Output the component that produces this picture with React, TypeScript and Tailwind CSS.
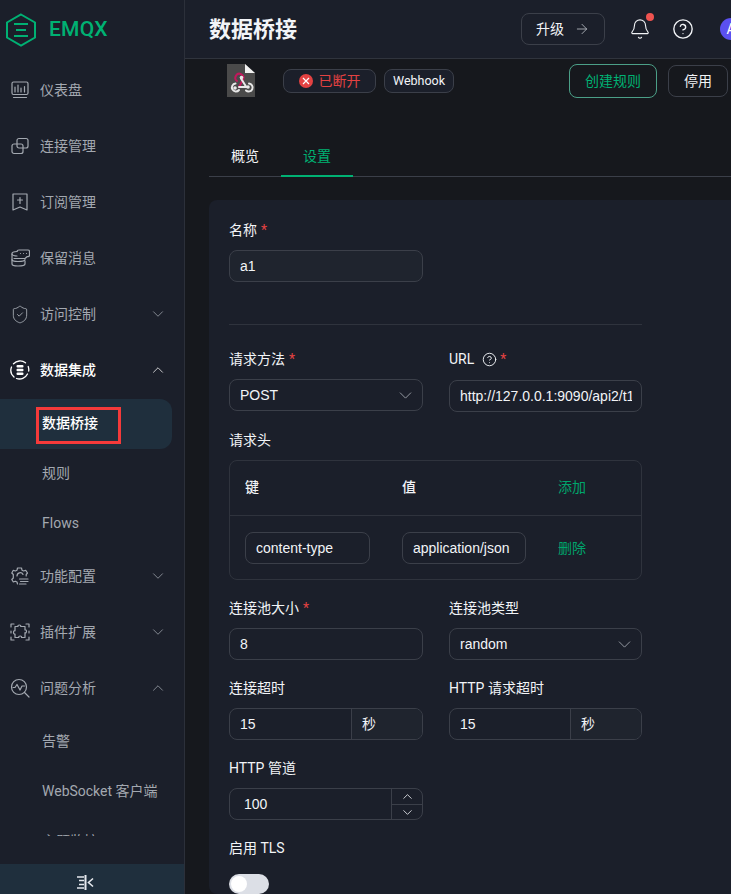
import type { ReactNode } from "react"
import { ArrowRight, Bell, ChevronDown, ChevronUp, CircleHelp, ShieldCheck } from "lucide-react"

const stroke = {
  fill: "none",
  stroke: "currentColor",
  strokeWidth: 1.2,
  strokeLinecap: "round" as const,
  strokeLinejoin: "round" as const,
}

function Logo() {
  return (
    <svg width="32" height="34" viewBox="0 0 32 34" fill="none" stroke="#00b173" strokeWidth="2">
      <path d="M16 1.500 30 9.500v15l-14 8-14-8v-15z" />
      <path d="M9 11h14M11 17h10M9 23h14" strokeWidth="2.2" />
    </svg>
  )
}

function DashboardIcon() {
  return (
    <svg width="18" height="18" viewBox="0 0 18 18" {...stroke}>
      <rect x="1" y="1" width="16" height="12.5" rx="1.5" />
      <path d="M4 11V6M7 11V4M10 11V7M13.5 11V5.5M2.5 16.5h13" />
    </svg>
  )
}

function ConnectionIcon() {
  return (
    <svg width="18" height="18" viewBox="0 0 18 18" {...stroke}>
      <rect x="6" y="1.5" width="11" height="9.5" rx="2" />
      <rect x="1" y="7" width="11" height="9.5" rx="2" />
    </svg>
  )
}

function SubscribeIcon() {
  return (
    <svg width="18" height="18" viewBox="0 0 18 18" {...stroke}>
      <path d="M2 1h14v16l-7-3-7 3z" />
      <path d="M9 4.500v6M6.500 7h5" />
    </svg>
  )
}

function RetainedIcon() {
  return (
    <svg width="19" height="18" viewBox="0 0 19 18" {...stroke}>
      <path d="M6 2.500C6 1.500 7 1 8 1h9c1 0 1.500.7 1.500 1.500V6c0 1-.6 1.700-1.500 1.700h-1L14 9.500H3" />
      <path d="M6 2.500C3 2.700 1 3.300 1 4.500V15c0 1.300 3 2 6 2s7-.7 7-2v-3" />
      <path d="M1 5c0 1.300 3 2 5 2M1 10.500c0 1.300 3 2 6 2s7-.7 7-2" />
      <path d="M9.500 4.500h.01M12.500 4.500h.01M15.500 4.500h.01" />
    </svg>
  )
}

function IntegrationIcon() {
  return (
    <svg width="20" height="20" viewBox="0 0 20 20" fill="none" stroke="currentColor" strokeWidth="1.3" strokeLinecap="round">
      <path d="M15.500 2.800A9 9 0 0 0 3.500 3.800M1.500 7a9 9 0 0 0 2.500 10M6.500 18.500a9 9 0 0 0 11-4.500M18.700 11a9 9 0 0 0-.5-4.500" />
      <rect x="6.500" y="5" width="7" height="2.600" rx="1" fill="currentColor" stroke="none" />
      <rect x="6.500" y="8.700" width="7" height="2.600" rx="1" fill="currentColor" stroke="none" />
      <rect x="6.500" y="12.400" width="7" height="2.600" rx="1" fill="currentColor" stroke="none" />
    </svg>
  )
}

function GearIcon() {
  return (
    <svg width="18" height="18" viewBox="0 0 18 18" {...stroke}>
      <path d="M6.500 17 6 15 4.300 14.200 2.300 15 .8 12.500 2.300 11V7.500L.8 6 2.300 3.300l2 .7L6 3.200 6.500 1h4l.5 2.200 1.700.8 2-.7L16.500 6l-1.300 1.500V9" />
      <path d="M6 9a3.200 3.200 0 0 1 6-1.600M8.500 12H17M9.500 14.500H17M8.500 17H15" />
    </svg>
  )
}

function PluginIcon() {
  return (
    <svg width="20" height="18" viewBox="0 0 20 18" {...stroke}>
      <path d="M1 4V1h3M16 1h3v3M1 14v3h3M16 17h3v-3M1 8v2M19 8v2" />
      <path d="M5 3.500h3c-.8-2 3.500-2 2.700 0H15v3.500c2-.8 2 3.500 0 2.700v4.800h-3.500c.8-2-3.500-2-2.700 0H5v-3.500c-2 .8-2-4 0-3.200z" />
    </svg>
  )
}

function AnalysisIcon() {
  return (
    <svg width="20" height="20" viewBox="0 0 20 20" {...stroke}>
      <circle cx="9" cy="9" r="7.500" />
      <path d="M3 9.500h2l2-3 3 5.500 2-4h2.500M14.500 14.500 19 19" />
    </svg>
  )
}

function CollapseIcon() {
  return (
    <svg width="18" height="15" viewBox="0 0 18 15" fill="none" stroke="#e6e9ee" strokeWidth="1.400">
      <path d="M1 2h7M3 5.500h5M3 9.500h5M1 13h7" />
      <path d="M9.500 0v15" strokeWidth="2" />
      <path d="M17 3.500l-4.500 4 4.500 4" strokeWidth="1.600" />
    </svg>
  )
}

function WebhookFile() {
  return (
    <svg width="28" height="33" viewBox="0 0 28 33">
      <path d="M0 0h18l10 9v24H0z" fill="#4a4a4a" />
      <path d="M18 0l10 9H18z" fill="#f1f1f1" />
      <g fill="none" strokeWidth="2" strokeLinecap="round">
        <path d="M12 23l4-7.500a4 4 0 1 0-6 1.500" stroke="#c2185b" />
        <path d="M12 23H20.500" stroke="#e8e8e8" />
        <path d="M14 14.500l5 8" stroke="#e8e8e8" />
        <path d="M8.500 19.500A4 4 0 1 0 12 26" stroke="#e8e8e8" />
        <path d="M22 19.500a4 4 0 1 1-3 7" stroke="#e8e8e8" />
      </g>
      <circle cx="14.500" cy="13.500" r="1.800" fill="#e8e8e8" />
      <circle cx="8" cy="24" r="1.800" fill="#e8e8e8" />
      <circle cx="21" cy="23" r="1.800" fill="#e8e8e8" />
    </svg>
  )
}

function MenuItem({ icon, label, open, active }: { icon: ReactNode; label: string; open?: boolean; active?: boolean }) {
  return (
    <div className={`flex h-14 shrink-0 items-center pl-[10px] pr-[17px] ${active ? "text-white font-medium" : "text-[#a3a8b0]"}`}>
      <span className="flex w-5 justify-center">{icon}</span>
      <span className="ml-[10px] flex-1 text-sm">{label}</span>
      {open === true && <ChevronUp size={18} strokeWidth={1} />}
      {open === false && <ChevronDown size={18} strokeWidth={1} />}
    </div>
  )
}

function SubItem({ label, active }: { label: string; active?: boolean }) {
  return (
    <div
      className={`flex h-[50px] w-[172px] shrink-0 items-center pl-[42px] text-sm ${
        active ? "mb-[-1px] mt-[1px] rounded-r-xl bg-[#1f2f3d] pb-[2px] font-medium text-white" : "text-[#a3a8b0]"
      }`}
    >
      {label}
    </div>
  )
}

function Sidebar() {
  return (
    <aside className="relative flex h-full w-[185px] shrink-0 flex-col border-r border-[#2c303a] bg-[#1b1f2a]">
      <div className="flex h-[62px] shrink-0 items-center pb-[3px] pl-[5px]">
        <Logo />
        <span className="ml-[12px] text-[21px] font-medium tracking-[0.2px] text-[#00b173]">EMQX</span>
      </div>
      <div className="flex h-[774px] shrink-0 flex-col overflow-hidden">
        <MenuItem icon={<DashboardIcon />} label="仪表盘" />
        <MenuItem icon={<ConnectionIcon />} label="连接管理" />
        <MenuItem icon={<SubscribeIcon />} label="订阅管理" />
        <MenuItem icon={<RetainedIcon />} label="保留消息" />
        <MenuItem icon={<ShieldCheck size={21} strokeWidth={1.1} />} label="访问控制" open={false} />
        <MenuItem icon={<IntegrationIcon />} label="数据集成" open active />
        <SubItem label="数据桥接" active />
        <SubItem label="规则" />
        <SubItem label="Flows" />
        <MenuItem icon={<GearIcon />} label="功能配置" open={false} />
        <MenuItem icon={<PluginIcon />} label="插件扩展" open={false} />
        <MenuItem icon={<AnalysisIcon />} label="问题分析" open />
        <SubItem label="告警" />
        <SubItem label="WebSocket 客户端" />
        <SubItem label="主题监控" />
      </div>
      <div className="mt-auto flex h-[30px] items-center justify-center bg-[#1f2f3d] pr-[14px] pt-[6px]">
        <CollapseIcon />
      </div>
      {/* annotation from the screenshot */}
      <div className="absolute left-[36px] top-[407px] h-[37px] w-[85px] border-[3px] border-[#f43a3a]" />
    </aside>
  )
}

function Label({ children, required, help }: { children: ReactNode; required?: boolean; help?: boolean }) {
  return (
    <div className="flex h-5 items-center text-sm text-[#f2f4f7]">
      <span>{children}</span>
      {help && <CircleHelp size={15} strokeWidth={1.5} className="ml-[8px]" />}
      {required && <span className={`${help ? "ml-[3px]" : "ml-[4px]"} text-[#e34242]`}>*</span>}
    </div>
  )
}

function Box({ children, className = "" }: { children: ReactNode; className?: string }) {
  return (
    <div
      className={`flex h-8 items-center rounded-lg border border-[#3b3f49] font-['Liberation_Sans','Noto_Sans_CJK_SC',sans-serif] text-sm text-[#f2f4f7] ${className}`}
    >
      {children}
    </div>
  )
}

function Field({ label, required, help, children }: { label: string; required?: boolean; help?: boolean; children: ReactNode }) {
  return (
    <div className="flex flex-col gap-[10px]">
      <Label required={required} help={help}>
        {label}
      </Label>
      {children}
    </div>
  )
}

function Select({ value }: { value: string }) {
  return (
    <Box className="justify-between pl-[10px] pr-[6px]">
      <span>{value}</span>
      <ChevronDown size={21} strokeWidth={1} className="text-[#a3a8b0]" />
    </Box>
  )
}

function WithUnit({ value, divider }: { value: string; divider: string }) {
  return (
    <Box className="overflow-hidden">
      <span className={`${divider} flex h-full items-center border-r border-[#3b3f49] pl-[10px]`}>{value}</span>
      <span className="flex h-full flex-1 items-center bg-[#1f242e] pl-[10px]">秒</span>
    </Box>
  )
}

function Form() {
  return (
    <div className="mr-[-20px] mt-[23px] flex-1 rounded-lg bg-[#1b1f2a] pl-5 pt-5">
      <div className="w-[413px]">
        <div className="w-[194px]">
          <Field label="名称" required>
            <Box className="bg-[#1f242e] pl-[10px]">a1</Box>
          </Field>
        </div>
        <div className="mb-[24px] mt-[42px] border-t border-[#2f333d]" />

        <div className="grid grid-cols-[194px_193px] gap-x-[26px] gap-y-[18px]">
          <Field label="请求方法" required>
            <Select value="POST" />
          </Field>
          <Field label="URL" required help>
            <Box className="mt-[1px] overflow-hidden pl-[10px]">
              <span className="w-[172px] overflow-hidden whitespace-nowrap">http://127.0.0.1:9090/api2/t1</span>
            </Box>
          </Field>

          <div className="col-span-2">
            <Field label="请求头">
              <div className="rounded-lg border border-[#2f333d] text-sm text-[#f2f4f7]">
                <div className="flex h-[55px] items-center border-b border-[#2f333d] pb-[2px] pl-[15px] font-medium">
                  <span className="w-[157px]">键</span>
                  <span className="w-[156px]">值</span>
                  <span className="font-normal text-[#00a56c]">添加</span>
                </div>
                <div className="flex h-[63px] items-center pl-[15px]">
                  <Box className="mr-[32px] w-[125px] pl-[10px]">content-type</Box>
                  <Box className="mr-[32px] w-[124px] pl-[10px]">application/json</Box>
                  <span className="text-[#00a56c]">删除</span>
                </div>
              </div>
            </Field>
          </div>

          <Field label="连接池大小" required>
            <Box className="pl-[10px]">8</Box>
          </Field>
          <Field label="连接池类型">
            <Select value="random" />
          </Field>

          <Field label="连接超时">
            <WithUnit value="15" divider="w-[122px]" />
          </Field>
          <Field label="HTTP 请求超时">
            <WithUnit value="15" divider="w-[121px]" />
          </Field>

          <Field label="HTTP 管道">
            <Box className="overflow-hidden">
              <span className="w-[161px] pl-[14px]">100</span>
              <div className="flex h-full flex-1 flex-col border-l border-[#3b3f49]">
                <span className="flex flex-1 items-center justify-center border-b border-[#3b3f49]">
                  <ChevronUp size={15} strokeWidth={1.3} />
                </span>
                <span className="flex flex-1 items-center justify-center">
                  <ChevronDown size={15} strokeWidth={1.3} />
                </span>
              </div>
            </Box>
          </Field>
          <div />

          <Field label="启用 TLS">
            <div className="mt-[6px] flex h-5 w-10 items-center rounded-full bg-[#dcdfe6] pl-[2px]">
              <span className="h-4 w-4 rounded-full bg-white" />
            </div>
          </Field>
        </div>
      </div>
    </div>
  )
}

export default function App() {
  return (
    <div className="flex h-screen w-full overflow-hidden bg-[#16181d] font-['Roboto','Noto_Sans_CJK_SC',sans-serif]">
      <Sidebar />
      <main className="flex h-full min-w-0 flex-1 flex-col">
        <header className="flex h-[59px] shrink-0 items-center border-b border-[#30343d] bg-[#1b1f2a] pl-6">
          <h1 className="flex-1 text-[22px] font-bold text-[#f2f4f7]">数据桥接</h1>
          <div className="flex h-8 w-[84px] items-center justify-center gap-[10px] rounded-lg border border-[#3b3f49] text-sm text-[#f2f4f7]">
            升级
            <ArrowRight size={16} strokeWidth={1.3} className="text-[#b5b9c0]" />
          </div>
          <div className="relative ml-[24px] text-[#f2f4f7]">
            <Bell size={22} strokeWidth={1.2} />
            <span className="absolute right-[-3px] top-[-5px] h-[8px] w-[8px] rounded-full bg-[#ef5350]" />
          </div>
          <CircleHelp size={22} strokeWidth={1.5} className="ml-[21px] text-[#f2f4f7]" />
          <div className="ml-[26px] mr-[-11px] flex h-[22px] w-[22px] shrink-0 items-center justify-center rounded-full bg-[#5b50f0] text-sm text-white">
            A
          </div>
        </header>

        <div className="flex min-h-0 flex-1 flex-col pl-6">
          <div className="flex h-[44px] shrink-0 items-center pr-[3px]">
            <span className="ml-[18px] mt-[-1px]">
              <WebhookFile />
            </span>
            <div className="ml-[28px] flex h-6 w-[93px] items-center justify-center gap-[6px] rounded-lg border border-[#3b3f49] bg-[#1b1f2a] text-sm text-[#e34242]">
              <span className="flex h-[14px] w-[14px] items-center justify-center rounded-full bg-[#e34242]">
                <svg width="8" height="8" viewBox="0 0 8 8" stroke="#fff" strokeWidth="1.2">
                  <path d="M1 1l6 6M7 1L1 7" />
                </svg>
              </span>
              已断开
            </div>
            <div className="ml-2 flex h-6 w-[70px] items-center justify-center rounded-lg border border-[#3b3f49] bg-[#1b1f2a] text-[12.500px] text-[#f2f4f7]">
              Webhook
            </div>
            <div className="ml-auto flex h-[34px] w-[88px] items-center justify-center rounded-lg border border-[#4b9f87] text-sm text-[#00b173]">
              创建规则
            </div>
            <div className="ml-[11px] flex h-8 w-[60px] items-center justify-center rounded-lg border border-[#3b3f49] text-sm text-[#f2f4f7]">
              停用
            </div>
          </div>

          <div className="mt-[34px] flex h-10 shrink-0 border-b border-[#3b3f49] pb-0 text-sm">
            <span className="flex w-[72px] items-center justify-center pb-[2px] text-[#f2f4f7]">概览</span>
            <span className="mb-[-1px] flex w-[72px] items-center justify-center border-b-2 border-[#00b173] pb-[1px] text-[#00b173]">设置</span>
          </div>

          <Form />
        </div>
      </main>
    </div>
  )
}
